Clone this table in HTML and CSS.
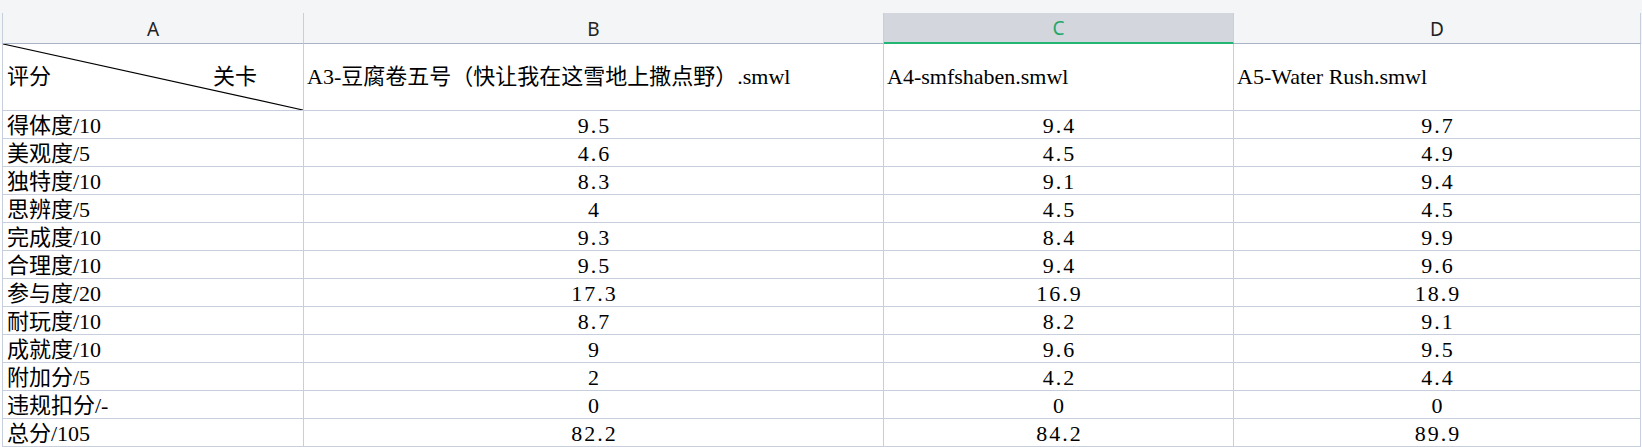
FILE: index.html
```html
<!DOCTYPE html>
<html lang="zh-CN">
<head>
    <meta charset="UTF-8">
    <title>评分表</title>
    <link rel="stylesheet" href="styles.css">
</head>
<body>
    <div class="sheet">
        <div class="col-head">A</div>
        <div class="col-head">B</div>
        <div class="col-head active">C</div>
        <div class="col-head">D</div>

        <div class="cell corner">
            <svg class="slash" viewBox="0 0 100 100" preserveAspectRatio="none"><line x1="0" y1="0" x2="100" y2="100" stroke="#000" stroke-width="1.2" vector-effect="non-scaling-stroke"/></svg>
            <span>评分</span><span>关卡</span>
        </div>
        <div class="cell title">A3-豆腐卷五号（快让我在这雪地上撒点野）.smwl</div>
        <div class="cell title">A4-smfshaben.smwl</div>
        <div class="cell title">A5-Water Rush.smwl</div>

        <div class="cell">得体度/10</div><div class="cell num">9.5</div><div class="cell num">9.4</div><div class="cell num">9.7</div>
        <div class="cell">美观度/5</div><div class="cell num">4.6</div><div class="cell num">4.5</div><div class="cell num">4.9</div>
        <div class="cell">独特度/10</div><div class="cell num">8.3</div><div class="cell num">9.1</div><div class="cell num">9.4</div>
        <div class="cell">思辨度/5</div><div class="cell num">4</div><div class="cell num">4.5</div><div class="cell num">4.5</div>
        <div class="cell">完成度/10</div><div class="cell num">9.3</div><div class="cell num">8.4</div><div class="cell num">9.9</div>
        <div class="cell">合理度/10</div><div class="cell num">9.5</div><div class="cell num">9.4</div><div class="cell num">9.6</div>
        <div class="cell">参与度/20</div><div class="cell num">17.3</div><div class="cell num">16.9</div><div class="cell num">18.9</div>
        <div class="cell">耐玩度/10</div><div class="cell num">8.7</div><div class="cell num">8.2</div><div class="cell num">9.1</div>
        <div class="cell">成就度/10</div><div class="cell num">9</div><div class="cell num">9.6</div><div class="cell num">9.5</div>
        <div class="cell">附加分/5</div><div class="cell num">2</div><div class="cell num">4.2</div><div class="cell num">4.4</div>
        <div class="cell">违规扣分/-</div><div class="cell num">0</div><div class="cell num">0</div><div class="cell num">0</div>
        <div class="cell">总分/105</div><div class="cell num">82.2</div><div class="cell num">84.2</div><div class="cell num">89.9</div>
    </div>
</body>
</html>
```

FILE: styles.css
```css
/* Page */
body {
    margin: 0;
    background-color: #fff;
    overflow: hidden;
}

/* Sheet grid */
.sheet {
    display: grid;
    grid-template-columns: 301px 580px 350px 407px;
    grid-template-rows: 31px 67px repeat(12, 28px);
    padding: 13px 0 0 3px;
    background: linear-gradient(#f4f5f7, #f4f5f7) top / 100% 44px no-repeat;
    font-family: "Liberation Serif", "Noto Sans CJK SC", serif;
    font-size: 22px;
    color: #000;
}

/* Column letters */
.col-head {
    box-sizing: border-box;
    display: flex;
    align-items: center;
    justify-content: center;
    padding-top: 1px;
    border-right: 1px solid #c8cfdc;
    border-bottom: 1px solid #a9b3c6;
    font-family: "Noto Sans", "Liberation Sans", sans-serif;
    font-size: 19px;
    color: #222;
}
.col-head:first-child {
    border-left: 1px solid #c8cfdc;
    margin-left: -1px;
}
.col-head.active {
    background-color: #d3d6dd;
    border-bottom: 2px solid #22b573;
    color: #1fa86a;
}

/* Cells */
.cell {
    box-sizing: border-box;
    display: flex;
    align-items: center;
    padding: 2px 4px 0;
    border-right: 1px solid #c8cfdc;
    border-bottom: 1px solid #c8cfdc;
    white-space: nowrap;
    line-height: 1;
}
.cell:nth-child(4n+1) {
    border-left: 1px solid #c8cfdc;
    margin-left: -1px;
}
.cell.title {
    padding: 0 3px;
}
.cell.num {
    justify-content: center;
    letter-spacing: 2px;
    padding-left: 6px;
}

/* Diagonal header cell */
.corner {
    position: relative;
    justify-content: space-between;
    padding: 0 46px 0 4px;
}
.slash {
    position: absolute;
    left: 0;
    top: 0;
    width: 100%;
    height: 100%;
}
```
